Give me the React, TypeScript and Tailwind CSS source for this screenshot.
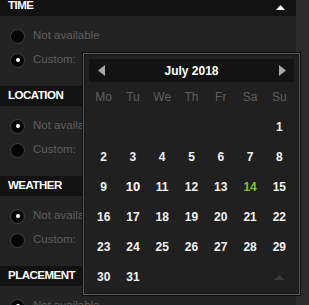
import React from "react";

const font = { fontFamily: '"Liberation Sans", Arial, sans-serif' };

function Radio({ checked, label }: { checked: boolean; label: string }) {
  return (
    <div className="flex h-6 items-center">
      <div className="ml-[11px] flex h-[13px] w-[13px] items-center justify-center rounded-full bg-[#060606] shadow-[0_0_0_1px_#3a3a3a]">
        {checked && <div className="h-[4px] w-[4px] rounded-full bg-white" />}
      </div>
      <span className="ml-[9px] text-[11.5px] text-[#5e5e5e]">{label}</span>
    </div>
  );
}

function Section({
  title,
  sel,
  caret,
  first,
}: {
  title: string;
  sel: number;
  caret?: boolean;
  first?: boolean;
}) {
  return (
    <div className={first ? "-mt-1" : ""}>
      <div className="relative flex h-5 items-center bg-[#121212] pl-2">
        <span className="text-[11.5px] font-bold tracking-[-0.5px] text-white">{title}</span>
        {caret && (
          <svg className="absolute left-[276px] top-[9px]" width="9" height="5" viewBox="0 0 9 5">
            <polygon points="0,5 4.5,0 9,5" fill="#fff" />
          </svg>
        )}
      </div>
      <div className="h-[70px] bg-[#232323] pt-2">
        <Radio checked={sel === 0} label="Not available" />
        <Radio checked={sel === 1} label="Custom:" />
      </div>
    </div>
  );
}

const days = ["Mo", "Tu", "We", "Th", "Fr", "Sa", "Su"];

export default function App() {
  const cells: (number | null)[] = [null, null, null, null, null, null];
  for (let i = 1; i <= 31; i++) cells.push(i);
  return (
    <div className="relative h-[305px] w-[309px] overflow-hidden bg-[#2b2b2b]" style={font}>
      <div className="w-[296px]">
        <Section title="TIME" sel={1} caret first />
        <Section title="LOCATION" sel={0} />
        <Section title="WEATHER" sel={0} />
        <Section title="PLACEMENT" sel={0} />
      </div>

      <div className="absolute left-[83px] top-[53px] w-[217px] border border-[#5c5c5c] bg-[#202020] px-[5px] pt-[5px] pb-[2px] shadow-[0_0_0_1px_#0c0c0c,inset_0_0_0_1px_#151515]">
        <div className="relative flex h-[23px] items-center justify-center bg-[#131313]">
          <svg className="absolute left-[9px] top-[6px]" width="7" height="11" viewBox="0 0 7 11">
            <polygon points="7,0 0,5.5 7,11" fill="#a8a8a8" />
          </svg>
          <span className="text-[12px] font-bold text-white">July 2018</span>
          <svg className="absolute right-[8px] top-[6px]" width="7" height="11" viewBox="0 0 7 11">
            <polygon points="0,0 7,5.5 0,11" fill="#a8a8a8" />
          </svg>
        </div>
        <div className="grid grid-cols-7">
          {days.map((d) => (
            <div key={d} className="flex h-[30px] items-center justify-center text-[12px] text-[#5f5f5f]">
              {d}
            </div>
          ))}
          {cells.map((c, i) => (
            <div
              key={i}
              className={
                "flex h-[30px] items-center justify-center font-bold " +
                (c === 14
                  ? "text-[12px] text-[#7cc52a]"
                  : c === 10
                  ? "text-[13px] text-white"
                  : "text-[12px] text-[#f2f2f2]")
              }
            >
              {c ?? ""}
            </div>
          ))}
          <div className="col-span-4" />
          <div className="flex h-[30px] items-center justify-center">
            <svg width="11" height="5" viewBox="0 0 11 5">
              <polygon points="0,5 5.5,0 11,5" fill="#3a3a3a" />
            </svg>
          </div>
        </div>
      </div>
    </div>
  );
}
